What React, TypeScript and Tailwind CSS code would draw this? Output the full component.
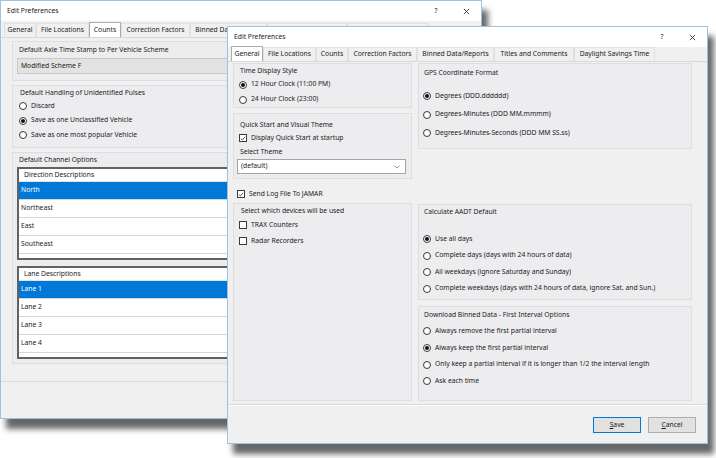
import React from "react";

const tabs = [
  { label: "General", w: "w-[32px]" },
  { label: "File Locations", w: "w-[53px]" },
  { label: "Counts", w: "w-[32px]" },
  { label: "Correction Factors", w: "w-[69px]" },
  { label: "Binned Data/Reports", w: "w-[77px]" },
  { label: "Titles and Comments", w: "w-[80px]" },
  { label: "Daylight Savings Time", w: "w-[81px]" },
];

function Radio({ label, checked = false, row = "h-[16px]" }: { label: string; checked?: boolean; row?: string }) {
  return (
    <div className={`flex items-center gap-[4px] ${row}`}>
      <span className="flex h-[8px] w-[8px] shrink-0 items-center justify-center rounded-full border border-[#3a3a3a] bg-white">
        {checked && <span className="h-[4px] w-[4px] rounded-full bg-[#111]" />}
      </span>
      <span className="whitespace-nowrap">{label}</span>
    </div>
  );
}

function Check({ label, checked = false, row = "h-[16px]" }: { label: string; checked?: boolean; row?: string }) {
  return (
    <div className={`flex items-center gap-[4px] ${row}`}>
      <span className="flex h-[8px] w-[8px] shrink-0 items-center justify-center border border-[#3a3a3a] bg-white">
        {checked && (
          <svg viewBox="0 0 8 8" className="h-[7px] w-[7px]">
            <path d="M1.2 4.2 L3.1 6 L6.8 1.8" fill="none" stroke="#222" strokeWidth="1" />
          </svg>
        )}
      </span>
      <span className="whitespace-nowrap">{label}</span>
    </div>
  );
}

function TitleBar() {
  return (
    <div className="flex h-[20px] items-center bg-white pl-[6px]">
      <span>Edit Preferences</span>
      <div className="ml-auto flex items-center">
        <span className="w-[30px] text-center">?</span>
        <span className="flex w-[30px] items-center justify-center">
          <svg viewBox="0 0 8 8" className="h-[7px] w-[7px]">
            <path d="M1 1 L7 7 M7 1 L1 7" stroke="#222" strokeWidth="0.9" />
          </svg>
        </span>
      </div>
    </div>
  );
}

function TabStrip({ active }: { active: string }) {
  return (
    <div className="flex h-[15px] items-end border-b border-[#d9d9d9] pl-[3px]">
      {tabs.map((t) => (
        <div
          key={t.label}
          className={`flex items-center justify-center whitespace-nowrap border border-b-0 ${t.w} ${
            t.label === active
              ? "h-[15px] border-[#adadad] bg-white"
              : "h-[14px] border-[#e0e0e0] bg-[#f0f0f0]"
          }`}
        >
          {t.label}
        </div>
      ))}
    </div>
  );
}

function Group({ className = "", children }: { className?: string; children: React.ReactNode }) {
  return (
    <div className={`flex flex-col border border-[#dedee2] bg-[#ededef] ${className}`}>{children}</div>
  );
}

function ListBox({ header, rows }: { header: string; rows: string[] }) {
  return (
    <div className="flex h-[93px] flex-col border-2 border-[#626262] bg-white">
      <div className="flex h-[13px] items-center border-b border-[#e4e4e4] pl-[5px]">{header}</div>
      {rows.map((r, i) => (
        <div
          key={r}
          className={`flex h-[18px] items-center border-b border-[#d6d6d6] pl-[2px] ${
            i === 0 ? "bg-[#0078d7] text-white" : ""
          }`}
        >
          {r}
        </div>
      ))}
    </div>
  );
}

function BackWindow() {
  return (
    <div className="absolute left-0 top-0 flex h-[419px] w-[482px] flex-col border border-[#9cc3e6] bg-[#f0f0f0] shadow-[6px_10px_6px_rgba(0,0,0,0.6)]">
      <TitleBar />
      <div className="mt-[2px]">
        <TabStrip active="Counts" />
      </div>
      <div className="flex flex-col gap-[4px] pl-[11px] pr-[10px] pt-[3px]">
        <Group className="h-[40px] px-[5px] pt-[2px]">
          <div className="flex h-[12px] items-center pl-[1px]">Default Axle Time Stamp to Per Vehicle Scheme</div>
          <div className="mt-[2px] flex h-[16px] items-center border border-[#c9c9c9] bg-[#e3e3e3] pl-[3px] -ml-[1px]">
            Modified Scheme F
          </div>
        </Group>
        <Group className="h-[63px] pl-[6px] pt-[1px]">
          <div className="flex h-[12px] items-center pl-[1px]">Default Handling of Unidentified Pulses</div>
          <Radio label="Discard" row="h-[14.5px]" />
          <Radio label="Save as one Unclassified Vehicle" checked row="h-[14.5px]" />
          <Radio label="Save as one most popular Vehicle" row="h-[14.5px]" />
        </Group>
        <Group className="h-[212px] px-[4px] pt-[1px]">
          <div className="flex h-[12px] items-center pl-[2px]">Default Channel Options</div>
          <div className="mt-[1px]">
            <ListBox header="Direction Descriptions" rows={["North", "Northeast", "East", "Southeast"]} />
          </div>
          <div className="mt-[6px]">
            <ListBox header="Lane Descriptions" rows={["Lane 1", "Lane 2", "Lane 3", "Lane 4"]} />
          </div>
        </Group>
      </div>
      <div className="mt-[17px] border-t border-[#dcdcdc]" />
    </div>
  );
}

function FrontWindow() {
  return (
    <div className="absolute left-[227px] top-[26px] flex h-[418px] w-[481px] flex-col border border-[#9cc3e6] bg-[#f0f0f0] shadow-[6px_10px_6px_rgba(0,0,0,0.6)]">
      <TitleBar />
      <TabStrip active="General" />
      <div className="flex gap-[6px] pl-[5px] pt-[1px]">
        {/* left column */}
        <div className="flex w-[179px] flex-col">
          <Group className="h-[45px] pl-[5px] pt-[1px]">
            <div className="flex h-[12px] items-center pl-[1px]">Time Display Style</div>
            <Radio label="12 Hour Clock (11:00 PM)" checked row="h-[15px]" />
            <Radio label="24 Hour Clock (23:00)" row="h-[15px]" />
          </Group>
          <Group className="mt-[5px] h-[66px] pl-[5px] pr-[5px] pt-[5px]">
            <div className="flex h-[12px] items-center pl-[1px]">Quick Start and Visual Theme</div>
            <Check label="Display Quick Start at startup" checked row="h-[14px]" />
            <div className="flex h-[14px] items-center pl-[1px]">Select Theme</div>
            <div className="-ml-[2px] flex h-[15px] items-center justify-between border border-[#a5a5a5] bg-white pl-[3px] pr-[5px]">
              <span>(default)</span>
              <svg viewBox="0 0 8 5" className="h-[4px] w-[6px]">
                <path d="M0.5 0.5 L4 4 L7.5 0.5" fill="none" stroke="#555" strokeWidth="0.9" />
              </svg>
            </div>
          </Group>
          <div className="mt-[8px] pl-[4px]">
            <Check label="Send Log File To JAMAR" checked row="h-[14px]" />
          </div>
          <Group className="mt-[2px] h-[198px] pl-[5px] pt-[1px]">
            <div className="flex h-[12px] items-center pl-[2px]">Select which devices will be used</div>
            <Check label="TRAX Counters" row="h-[16px]" />
            <Check label="Radar Recorders" row="h-[16px]" />
          </Group>
        </div>
        {/* right column */}
        <div className="flex w-[274px] flex-col">
          <Group className="h-[86px] pl-[4px] pt-[3px]">
            <div className="flex h-[12px] items-center pl-[1px]">GPS Coordinate Format</div>
            <div className="mt-[8px] flex flex-col">
              <Radio label="Degrees (DDD.dddddd)" checked row="h-[18.5px]" />
              <Radio label="Degrees-Minutes (DDD MM.mmmm)" row="h-[18.5px]" />
              <Radio label="Degrees-Minutes-Seconds  (DDD MM SS.ss)" row="h-[18.5px]" />
            </div>
          </Group>
          <Group className="mt-[55px] h-[96px] pl-[4px] pt-[1px]">
            <div className="flex h-[12px] items-center pl-[1px]">Calculate AADT Default</div>
            <div className="mt-[13px] flex flex-col">
              <Radio label="Use all days" checked row="h-[16.5px]" />
              <Radio label="Complete days (days with 24 hours of data)" row="h-[16.5px]" />
              <Radio label="All weekdays (ignore Saturday and Sunday)" row="h-[16.5px]" />
              <Radio label="Complete weekdays (days with 24 hours of data, ignore Sat. and Sun.)" row="h-[16.5px]" />
            </div>
          </Group>
          <Group className="mt-[6px] h-[95px] pl-[4px] pt-[2px]">
            <div className="flex h-[12px] items-center pl-[1px]">Download Binned Data - First Interval Options</div>
            <div className="mt-[2px] flex flex-col">
              <Radio label="Always remove the first partial interval" row="h-[16.7px]" />
              <Radio label="Always keep the first partial interval" checked row="h-[16.7px]" />
              <Radio label="Only keep a partial interval if it is longer than 1/2 the interval length" row="h-[16.7px]" />
              <Radio label="Ask each time" row="h-[16.7px]" />
            </div>
          </Group>
        </div>
      </div>
      <div className="mt-[3px] border-t border-[#dadada] border-b border-b-white" />
      <div className="mt-[11px] flex justify-end gap-[7px] pr-[11px]">
        <button className="flex h-[16px] w-[48px] items-center justify-center border border-[#0078d7] bg-[#e1e1e1]">
          <span>
            <span className="underline">S</span>ave
          </span>
        </button>
        <button className="flex h-[16px] w-[48px] items-center justify-center border border-[#adadad] bg-[#e1e1e1]">
          <span>
            <span className="underline">C</span>ancel
          </span>
        </button>
      </div>
    </div>
  );
}

export default function App() {
  return (
    <div className="relative h-[458px] w-[716px] overflow-hidden bg-white font-['Noto_Sans',sans-serif] text-[6.75px] leading-none text-[#1b1b1b]">
      <BackWindow />
      <FrontWindow />
    </div>
  );
}
